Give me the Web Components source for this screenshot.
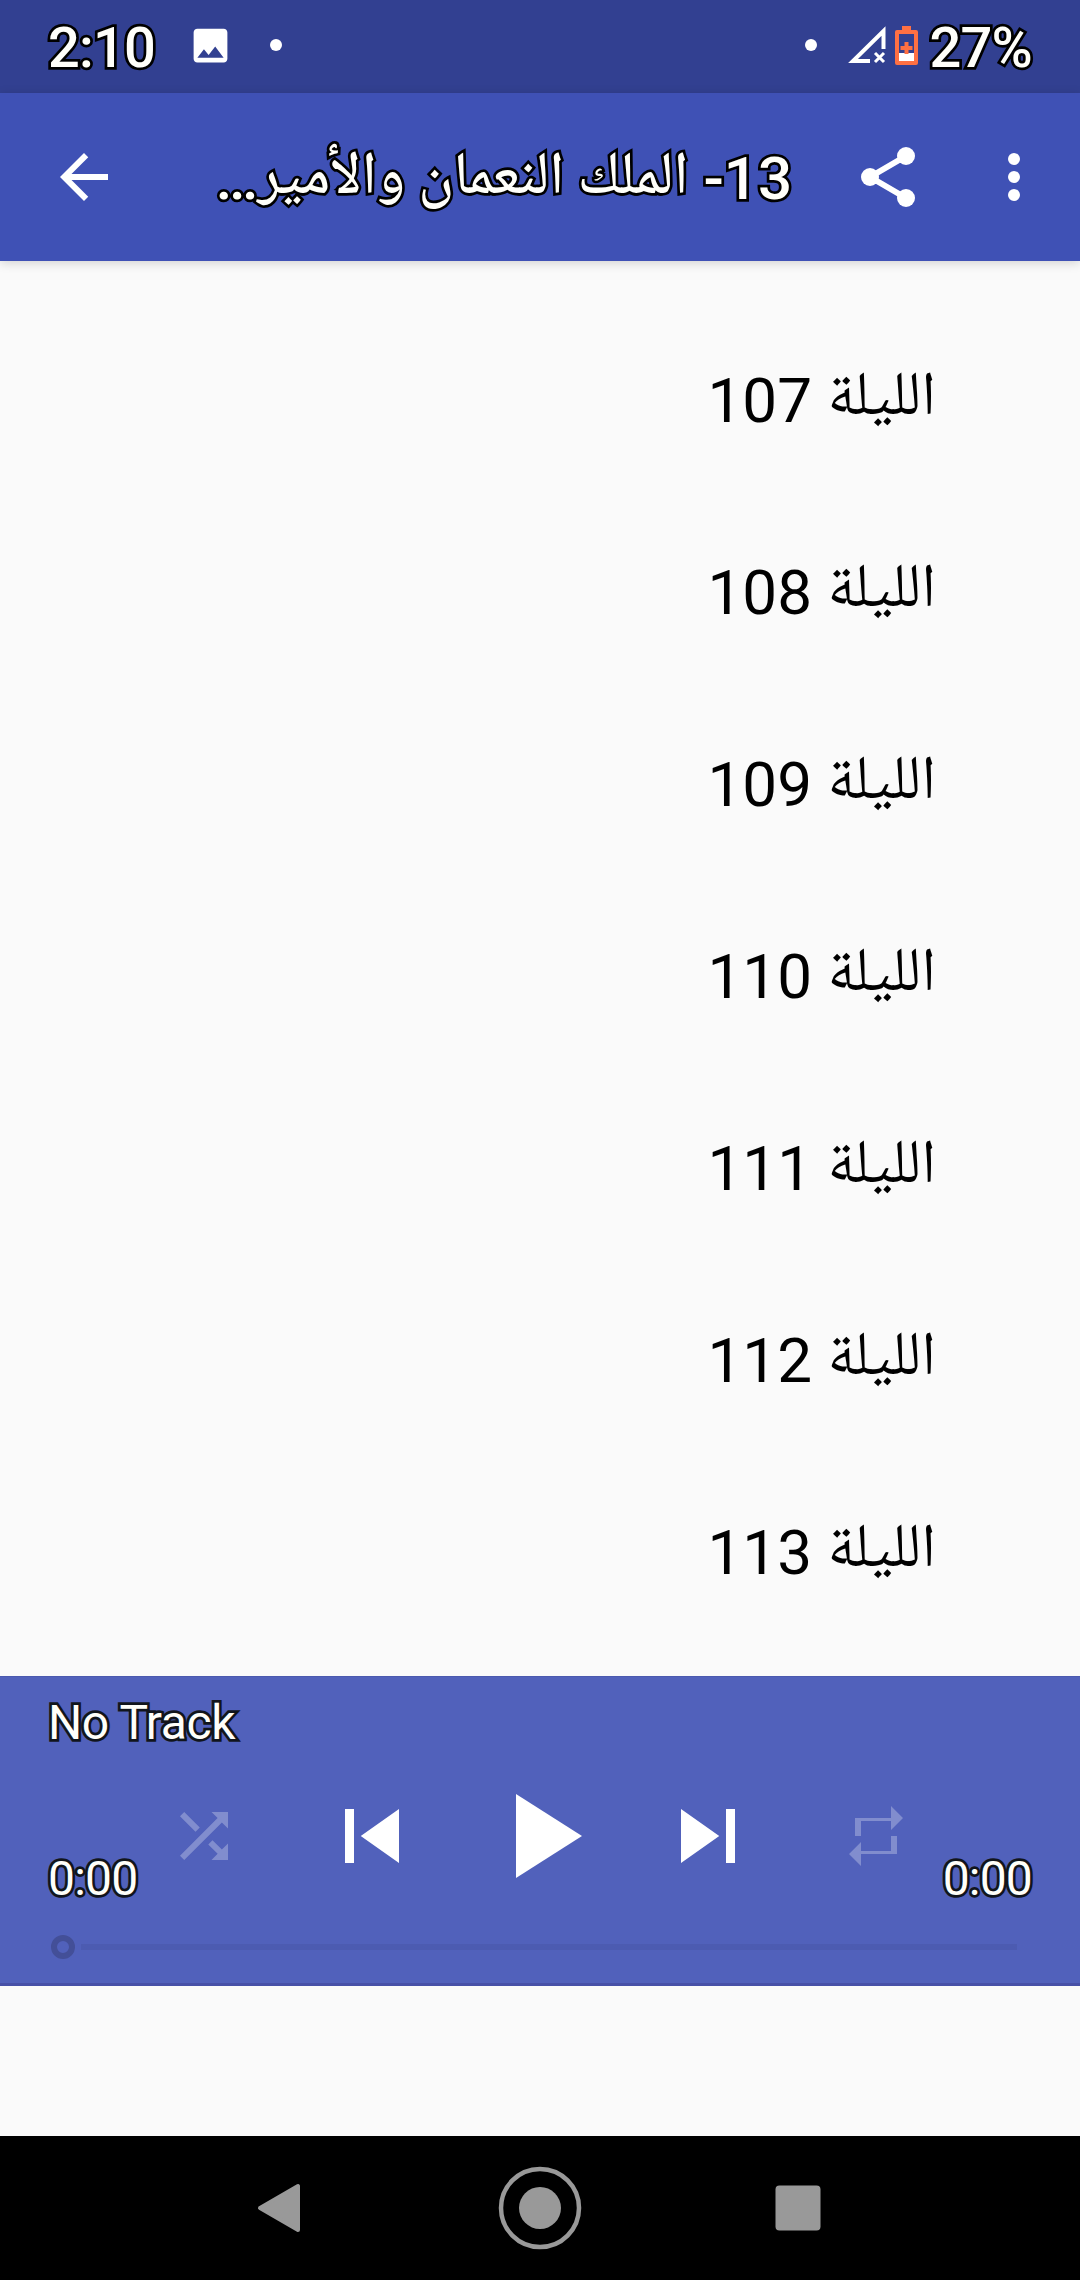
<!DOCTYPE html>
<html lang="ar">
<head>
<meta charset="utf-8">
<title>Audio player</title>
<style>
    body { margin: 0; background: #fafafa; }
</style>
</head>
<body>
<player-app></player-app>

<script>
const ICONS = {
    back: '<path d="M20 11H7.83l5.59-5.59L12 4l-8 8 8 8 1.41-1.41L7.83 13H20v-2z"/>',
    share: '<path d="M6 12L18 5M6 12l12 7" fill="none" stroke="currentColor" stroke-width="2"/><circle cx="6" cy="12" r="3"/><circle cx="18" cy="5" r="3"/><circle cx="18" cy="19" r="3"/>',
    more: '<circle cx="12" cy="6" r="2"/><circle cx="12" cy="12" r="2"/><circle cx="12" cy="18" r="2"/>',
    shuffle: '<path d="M10.59 9.17L5.41 4 4 5.41l5.17 5.17 1.42-1.41zM14.5 4l2.04 2.04L4 18.59 5.41 20 17.96 7.46 20 9.5V4h-5.5zm.33 9.41l-1.41 1.41 3.13 3.13L14.5 20H20v-5.5l-2.04 2.04-3.13-3.13z"/>',
    prev: '<path d="M6 6h2v12H6zm3.5 6l8.5 6V6z"/>',
    play: '<path d="M8 5v14l11-7z"/>',
    next: '<path d="M6 18l8.5-6L6 6v12zM16 6v12h2V6h-2z"/>',
    repeat: '<path d="M7 7h10v3l4-4-4-4v4H5v6h2V7zm10 10H7v-3l-4 4 4 4v-4h12v-6h-2v4z"/>',
    image: '<path d="M21 19V5c0-1.1-.9-2-2-2H5c-1.1 0-2 .9-2 2v14c0 1.1.9 2 2 2h14c1.1 0 2-.9 2-2zM8.500 14l2.500 3L14.500 12.500l4.500 6H5z" fill-rule="evenodd"/>',
};

class MdIcon extends HTMLElement {
    constructor() {
        super();
        this.attachShadow({ mode: 'open' });
    }

    connectedCallback() {
        const size = this.getAttribute('size') || '72';
        this.shadowRoot.innerHTML = `
            <style>
                :host { display: block; flex: none; }
                svg { display: block; fill: currentColor; }
            </style>
            <svg width="${size}" height="${size}" viewBox="0 0 24 24">${ICONS[this.getAttribute('name')]}</svg>
        `;
    }
}
customElements.define('md-icon', MdIcon);

class OutlinedText extends HTMLElement {
    constructor() {
        super();
        this.attachShadow({ mode: 'open' }).innerHTML = `
            <style>
                :host {
                    display: block;
                    white-space: nowrap;
                    color: #fffffa;
                    -webkit-text-stroke: 5.5px var(--outline, #000);
                    paint-order: stroke fill;
                    stroke-linejoin: round;
                }
            </style>
            <slot></slot>
        `;
    }
}
customElements.define('outlined-text', OutlinedText);

/* Arabic words, raised a little against the Latin digits */
class ArabicRun extends HTMLElement {
    constructor() {
        super();
        this.attachShadow({ mode: 'open' }).innerHTML = `
            <style>
                :host {
                    display: inline-block;
                    line-height: 1;
                    font-family: "Noto Naskh Arabic", Roboto, "DejaVu Sans", sans-serif;
                    margin-left: var(--pull, 0);
                    transform: translateY(var(--raise, -8px)) scaleX(var(--sx, 1));
                    transform-origin: right;
                }
            </style>
            <slot></slot>
        `;
    }
}
customElements.define('arabic-run', ArabicRun);

class StatusBar extends HTMLElement {
    constructor() {
        super();
        this.attachShadow({ mode: 'open' }).innerHTML = `
            <style>
                :host {
                    display: flex;
                    align-items: center;
                    box-sizing: border-box;
                    height: 93px;
                    padding: 0 48px 3px;
                    background: #324091;
                    color: #fff;
                    font: 500 56px/90px Roboto, sans-serif;
                }
                outlined-text { height: 90px; margin-top: 6px; letter-spacing: -.8px; }
                .image { margin-left: 33px; }
                .dot { width: 12px; height: 12px; border-radius: 50%; background: #fff; }
                .left { margin-left: 37px; }
                .right { margin-left: auto; }
                .signal { margin-left: 31px; }
                .battery { margin: 0 12px 0 9px; }
                svg { display: block; flex: none; }
            </style>
            <outlined-text>2:10</outlined-text>
            <md-icon class="image" name="image" size="45"></md-icon>
            <span class="dot left"></span>
            <span class="dot right"></span>
            <svg class="signal" width="38" height="38" viewBox="0 0 38 38" fill="none" stroke="#fff">
                <path d="M22 35H5L35.500 5v18" stroke-width="4"/>
                <path d="M27 27l9 9m0-9l-9 9" stroke-width="3"/>
            </svg>
            <svg class="battery" width="23" height="39" viewBox="0 0 23 39">
                <path fill="#ff7043" fill-rule="evenodd" d="M7 0h9v4h5q2 0 2 2v31q0 2-2 2H2q-2 0-2-2V6q0-2 2-2h5zM4 8v27h15V8z"/>
                <path fill="#fff" d="M4 27h15v8H4z"/>
                <path fill="#ff7043" d="M9.500 16h4v4h4v4h-4v4h-4v-4h-4v-4h4z"/>
            </svg>
            <outlined-text>27%</outlined-text>
        `;
    }
}
customElements.define('status-bar', StatusBar);

class AppBar extends HTMLElement {
    constructor() {
        super();
        this.attachShadow({ mode: 'open' }).innerHTML = `
            <style>
                :host {
                    --raise: -6.5px;
                    --sx: .992;
                    --pull: -4px;
                    display: flex;
                    align-items: center;
                    box-sizing: border-box;
                    height: 168px;
                    padding: 0 30px 0 48px;
                    background: #3f51b5;
                    color: #fff;
                    box-shadow: 0 2px 10px rgba(0, 0, 0, .16);
                    font: 500 60px/168px Roboto, sans-serif;
                }
                .title { margin-left: auto; margin-right: 60px; padding-top: 3px; }
                .more { margin-left: 54px; }
            </style>
            <md-icon name="back"></md-icon>
            <outlined-text class="title" dir="rtl"><slot></slot></outlined-text>
            <md-icon name="share"></md-icon>
            <md-icon class="more" name="more"></md-icon>
        `;
    }
}
customElements.define('app-bar', AppBar);

class TrackRow extends HTMLElement {
    constructor() {
        super();
        this.attachShadow({ mode: 'open' }).innerHTML = `
            <style>
                :host {
                    display: block;
                    box-sizing: border-box;
                    height: 192px;
                    padding-right: 144px;
                    color: #000;
                    font: 400 62px/192px Roboto, sans-serif;
                    white-space: nowrap;
                }
            </style>
            <slot></slot>
        `;
    }
}
customElements.define('track-row', TrackRow);

class PlayerPanel extends HTMLElement {
    constructor() {
        super();
        this.attachShadow({ mode: 'open' }).innerHTML = `
            <style>
                :host {
                    --outline: #11151c;
                    display: flex;
                    flex-direction: column;
                    box-sizing: border-box;
                    height: 310px;
                    padding: 0 48px;
                    border-top: 1px solid #4b59ae;
                    border-bottom: 3px solid #4751a7;
                    background: #5161bb;
                    color: #fff;
                    font: 400 48px/56px Roboto, sans-serif;
                    letter-spacing: -.4px;
                }
                .track { margin-top: 18px; }
                .controls {
                    display: grid;
                    grid-template-columns: repeat(5, 168px);
                    justify-content: center;
                    place-items: center;
                    height: 144px;
                    margin-top: 13px;
                }
                .off { opacity: .28; }
                .times {
                    display: flex;
                    justify-content: space-between;
                    margin-top: -57px;
                    letter-spacing: -.8px;
                }
                .seek { display: flex; align-items: center; gap: 6px; padding: 0 15px 0 3px; margin-top: 28px; }
                .thumb { box-sizing: border-box; width: 24px; height: 24px; border: 6px solid #434f98; border-radius: 50%; }
                .line { flex: 1; height: 6px; background: #4c5bb1; }
            </style>
            <outlined-text class="track">No Track</outlined-text>
            <div class="controls">
                <md-icon class="off" name="shuffle"></md-icon>
                <md-icon name="prev" size="108"></md-icon>
                <md-icon name="play" size="144"></md-icon>
                <md-icon name="next" size="108"></md-icon>
                <md-icon class="off" name="repeat"></md-icon>
            </div>
            <div class="times">
                <outlined-text>0:00</outlined-text>
                <outlined-text>0:00</outlined-text>
            </div>
            <div class="seek"><span class="thumb"></span><span class="line"></span></div>
        `;
    }
}
customElements.define('player-panel', PlayerPanel);

class NavBar extends HTMLElement {
    constructor() {
        super();
        this.attachShadow({ mode: 'open' }).innerHTML = `
            <style>
                :host {
                    display: grid;
                    grid-template-columns: repeat(3, 258px);
                    justify-content: center;
                    place-items: center;
                    height: 144px;
                    background: #000;
                }
                svg { display: block; }
            </style>
            <svg width="84" height="84" viewBox="0 0 84 84"><path d="M20 42L58 20v44z" fill="#999" stroke="#999" stroke-width="4" stroke-linejoin="round"/></svg>
            <svg width="84" height="84" viewBox="0 0 84 84"><circle cx="42" cy="42" r="39" fill="none" stroke="#999" stroke-width="4.500"/><circle cx="42" cy="42" r="21" fill="#999"/></svg>
            <svg width="84" height="84" viewBox="0 0 84 84"><rect x="19.500" y="19.500" width="45" height="45" rx="4" fill="#999"/></svg>
        `;
    }
}
customElements.define('nav-bar', NavBar);

class PlayerApp extends HTMLElement {
    constructor() {
        super();
        const nights = [107, 108, 109, 110, 111, 112, 113];
        this.attachShadow({ mode: 'open' }).innerHTML = `
            <style>
                :host { display: flex; flex-direction: column; width: 1080px; height: 2280px; overflow: hidden; }
                .list { flex: 1; padding-top: 44px; }
                player-panel { margin-bottom: 150px; }
            </style>
            <status-bar></status-bar>
            <app-bar>13- <arabic-run>الملك النعمان والأمير</arabic-run>…</app-bar>
            <div class="list">
                ${nights.map(n => `<track-row dir="rtl"><arabic-run>الليلة</arabic-run> ${n}</track-row>`).join('')}
            </div>
            <player-panel></player-panel>
            <nav-bar></nav-bar>
        `;
    }
}
customElements.define('player-app', PlayerApp);
</script>
</body>
</html>
